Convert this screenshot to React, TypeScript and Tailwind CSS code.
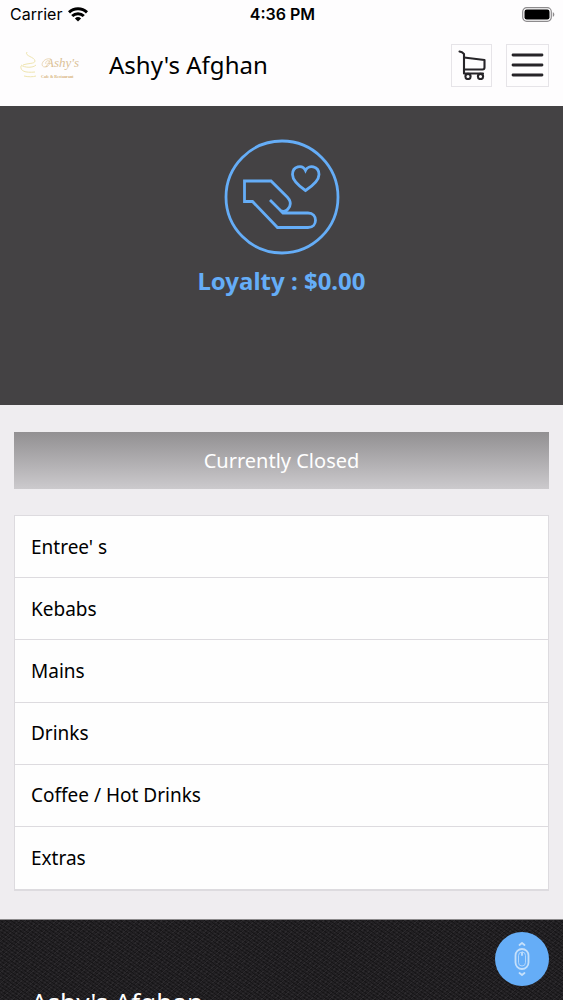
const categories = ["Entree' s", "Kebabs", "Mains", "Drinks", "Coffee / Hot Drinks", "Extras"];

function StatusBar() {
  return (
    <div className="grid h-7 grid-cols-3 items-center pr-2 pl-[10px] font-['Inter',sans-serif] text-base leading-7 text-black">
      <div className="flex items-center gap-1.5">
        <span>Carrier</span>
        <svg viewBox="0 0 20 15" className="h-[15px] w-5" fill="none" stroke="currentColor" strokeWidth="3" aria-label="Wi-Fi">
          <path d="M1 5.4a13 13 0 0 1 18 0" />
          <path d="M4.2 9a8.3 8.3 0 0 1 11.6 0" />
          <path d="M10 14.6 6.9 11.5a4.5 4.5 0 0 1 6.2 0Z" fill="currentColor" stroke="none" />
        </svg>
      </div>
      <time className="text-center font-semibold whitespace-nowrap">4:36 PM</time>
      <svg viewBox="0 0 33 15" className="h-[15px] w-[33px] justify-self-end" aria-label="Battery full">
        <rect x="0.7" y="0.7" width="28.6" height="13.6" rx="4" fill="none" stroke="#8d8b8d" strokeWidth="1.2" />
        <rect x="2.5" y="2.5" width="25" height="10" rx="2.2" fill="#000" />
        <path d="M30.8 5.2c2 .7 2 3.900 0 4.600Z" fill="#8d8b8d" />
      </svg>
    </div>
  );
}

function Logo() {
  return (
    <svg viewBox="0 0 70 45" className="h-[45px] w-[70px]" role="img" aria-label="Ashy's Cafe & Restaurant">
      <g fill="none" stroke="#efe5b0" strokeWidth="1">
        <path d="M12 9c-3 4 8 5 8 9 0 3-7 2-12 4" />
        <path d="M6 22c4 3 12 3 15 0M6 23c-1 5 4 7 14 6M9 33c4 1 9 1 12 0" />
      </g>
      <text x="31" y="24" fontFamily="Liberation Serif, serif" fontStyle="italic" fontSize="13" fill="#dbc196">
        Ashy's
      </text>
      <path d="M36 16c-8-2-12 8-6 8 4 0 6-5 4-6s-4 1-3 3" fill="none" stroke="#e2c99d" strokeWidth="0.7" />
      <text x="26" y="35" fontFamily="Liberation Serif, serif" fontWeight="bold" fontSize="4" fill="#d6b47c">
        Cafe &amp; Restaurant
      </text>
    </svg>
  );
}

function Header() {
  return (
    <header className="flex h-[78px] items-center pr-[14px] pb-1 pl-[15px]">
      <a href="#home">
        <Logo />
      </a>
      <h1 className="ml-6 flex-1 text-[24px] leading-8 text-black">Ashy's Afghan</h1>
      <button type="button" aria-label="Cart" className="flex h-[43px] w-[41px] items-center justify-center border border-[#e6e4e8]">
        <svg viewBox="0 0 28 30" className="h-[30px] w-7" fill="none" stroke="#262428" strokeWidth="2.1" strokeLinecap="round" strokeLinejoin="round">
          <path d="M1.500 1.500 4 2.200 6 4v19.500h19" />
          <path d="M6 7.500 26.500 10v7.500c0 1.200-.6 2-2 2H6" />
          <circle cx="10" cy="26.500" r="2.600" />
          <circle cx="22.500" cy="26.500" r="2.600" />
        </svg>
      </button>
      <button type="button" aria-label="Menu" className="ml-[14px] flex h-[43px] w-[43px] items-center justify-center border border-[#e6e4e8]">
        <svg viewBox="0 0 33 24" className="h-6 w-[33px]" stroke="#262428" strokeWidth="2.8" strokeLinecap="round">
          <path d="M2 2h29M2 12h29M2 22h29" />
        </svg>
      </button>
    </header>
  );
}

function Loyalty() {
  return (
    <section className="flex h-[299px] shrink-0 flex-col items-center bg-[#444244] pt-[33px] text-[#65adf7]">
      <svg viewBox="0 0 116 116" className="size-[116px]" fill="none" stroke="currentColor" strokeWidth="2.8" aria-hidden="true">
        <circle cx="58" cy="58" r="56" />
        <path d="M46 61 56.500 71.500c5 3 11-3 9.500-9-.4-1.600-1.400-3-2.600-4.300L47 42H20.500v20.500H28.500L53.500 88.500H84c10 0 10-14.500 0-14.500H59L55.500 70.500" />
        <path d="M81.500 51.500C72 45 68.500 40 68.500 35.500c0-8.500 10-10.500 13-4 3-6.500 13.500-4.500 13.500 4 0 4.500-3.500 9.500-13.500 16Z" />
      </svg>
      <p className="mt-[10px] text-[24px] leading-8 font-bold">Loyalty : $0.00</p>
    </section>
  );
}

export default function App() {
  return (
    <div className="flex h-screen flex-col overflow-hidden bg-[#efedf0] font-['Noto_Sans',sans-serif]">
      <div className="shrink-0 bg-[#fefdfe]">
        <StatusBar />
        <Header />
      </div>

      <main className="shrink-0">
        <Loyalty />
        <div className="px-[14px] pt-[27px] pb-7">
          <p className="bg-linear-to-b from-[#929092] to-[#cccacd] text-center text-[20px] leading-[57px] text-white">
            Currently Closed
          </p>
          <nav aria-label="Menu categories" className="mt-[26px] border border-b-2 border-[#dddbdf] bg-[#fefefe]">
            <ul className="grid min-h-[373px] auto-rows-fr divide-y divide-[#dddbdf]">
              {categories.map((name) => (
                <li key={name} className="flex">
                  <a href="#menu" className="flex flex-1 items-center px-4 text-[19px] leading-7 text-black">
                    {name}
                  </a>
                </li>
              ))}
            </ul>
          </nav>
        </div>
      </main>

      <footer className="shrink-0 border-t border-[#8b898b] bg-[#222023] bg-[repeating-linear-gradient(35deg,#00000050_0_1px,transparent_1px_3px),repeating-linear-gradient(-40deg,#ffffff0c_0_1px,transparent_1px_4px)] px-[31px] pt-[64px] pb-10 text-white">
        <h2 className="text-[26px] leading-9">Ashy's Afghan</h2>
      </footer>

      <button type="button" aria-label="Scroll" className="fixed right-[14px] bottom-[14px] flex size-[54px] items-center justify-center rounded-full bg-[#65adf7]">
        <svg viewBox="0 0 18 36" className="h-9 w-[18px]" fill="none" stroke="#c5e0fb" strokeWidth="1.8" strokeLinecap="round" strokeLinejoin="round">
          <rect x="2.500" y="8" width="13" height="20" rx="6.500" />
          <rect x="5.500" y="11" width="7" height="14" rx="3.500" strokeWidth="0.8" />
          <path d="M9 12v2M6.500 4 9 2l2.500 2M6.500 32 9 34l2.500-2" />
        </svg>
      </button>
    </div>
  );
}
